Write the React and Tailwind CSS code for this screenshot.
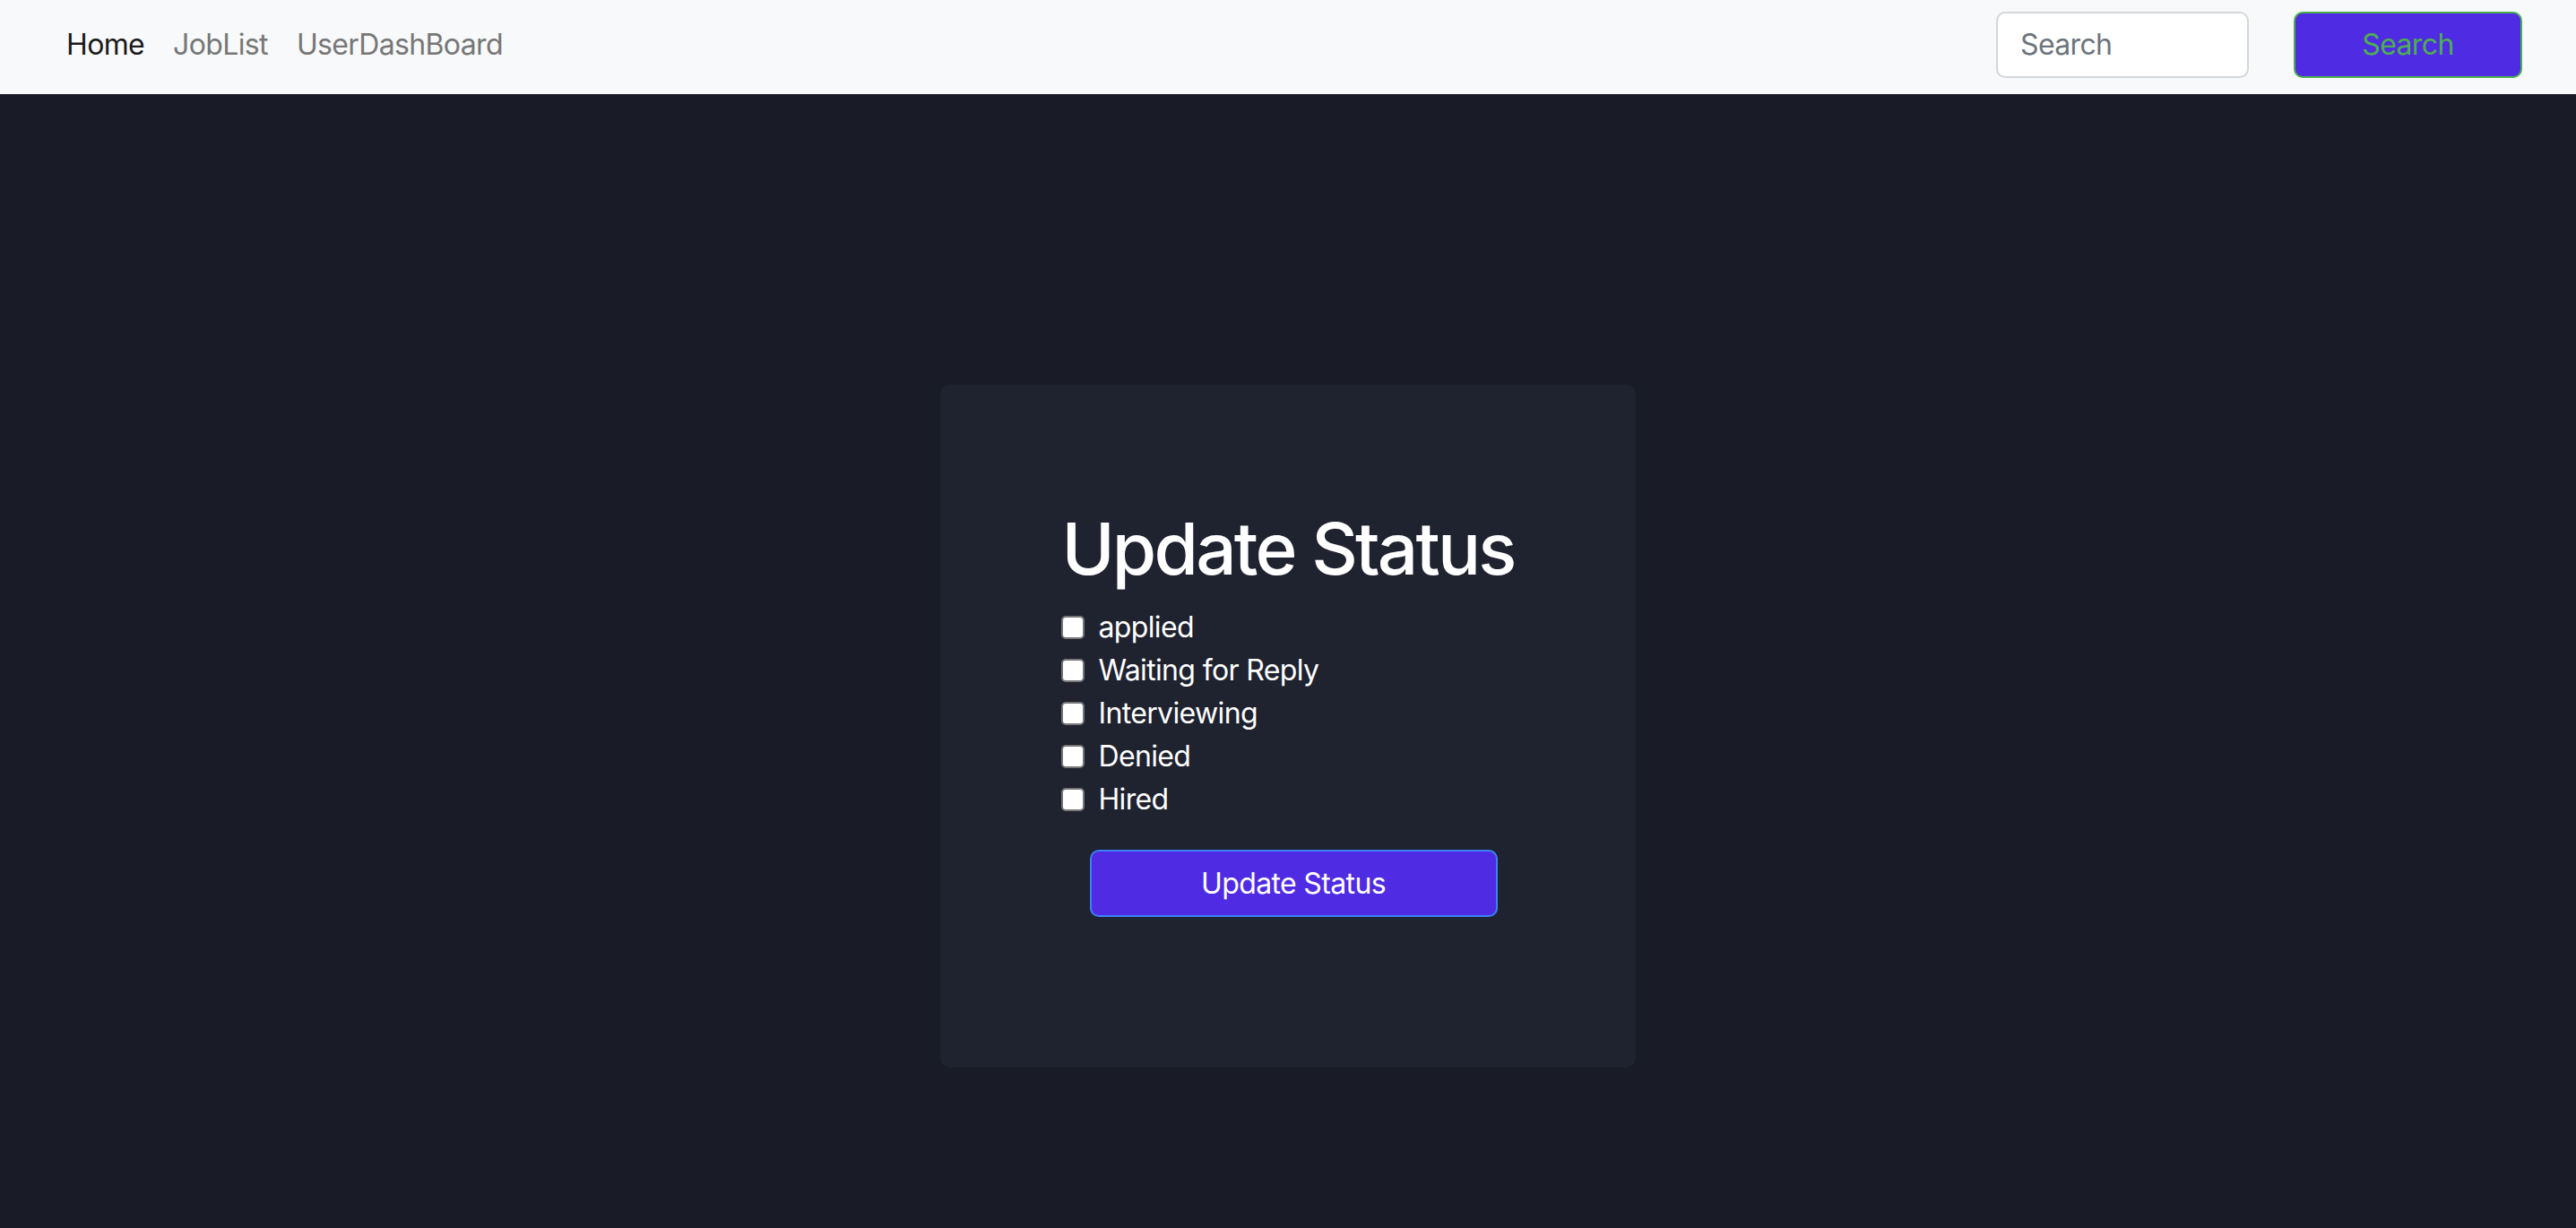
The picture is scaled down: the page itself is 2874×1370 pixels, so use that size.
import React from 'react';

const statuses = ['applied', 'Waiting for Reply', 'Interviewing', 'Denied', 'Hired'];

export default function App() {
  return (
    <div className="min-h-screen bg-[#191c27] font-['Inter',sans-serif]">
      <nav className="flex h-[105px] items-center justify-between bg-[#f8f9fa] pb-[6px] pl-[58px] pr-[60px]">
        <div className="flex items-center text-[32px] tracking-[-0.02em]">
          <a className="px-4 text-[#1a1a1a]">Home</a>
          <a className="px-4 text-[#777777]">JobList</a>
          <a className="px-4 text-[#777777]">UserDashBoard</a>
        </div>
        <form className="flex items-center gap-[50px]" onSubmit={(e) => e.preventDefault()}>
          <input
            type="text"
            placeholder="Search"
            className="h-[74px] w-[282px] rounded-[10px] border-2 border-[#d3d6da] bg-white pl-[25px] text-[32px] tracking-[-0.02em] text-[#212529] outline-none placeholder:text-[#6c757d]"
          />
          <button className="h-[74px] w-[255px] rounded-[10px] border-2 border-[#4caf50] bg-[#4f2be3] text-[32px] tracking-[-0.02em] text-[#4caf50]">
            Search
          </button>
        </form>
      </nav>

      <main className="flex justify-center pt-[324px] pb-[179px]">
        <div className="flex h-[762px] w-[776px] flex-col items-center rounded-[10px] bg-[#1f222f] pt-[135px]">
          <div className="w-fit">
            <h1 className="mb-4 text-[80px] font-medium leading-[96px] tracking-[-0.035em] text-white">Update Status</h1>
            <div className="flex flex-col">
              {statuses.map((s) => (
                <label key={s} className="flex h-[48px] items-center gap-[15px] text-[32px] tracking-[-0.02em] text-white">
                  <input
                    type="checkbox"
                    className="h-[26px] w-[26px] appearance-none rounded-[5px] border-2 border-[#767676] bg-white"
                  />
                  {s}
                </label>
              ))}
            </div>
          </div>
          <button className="mt-[32px] ml-[12px] h-[75px] w-[455px] rounded-[10px] border-2 border-[#3b82f6] bg-[#4f2be3] text-[32px] tracking-[-0.02em] text-white">
            Update Status
          </button>
        </div>
      </main>
    </div>
  );
}
